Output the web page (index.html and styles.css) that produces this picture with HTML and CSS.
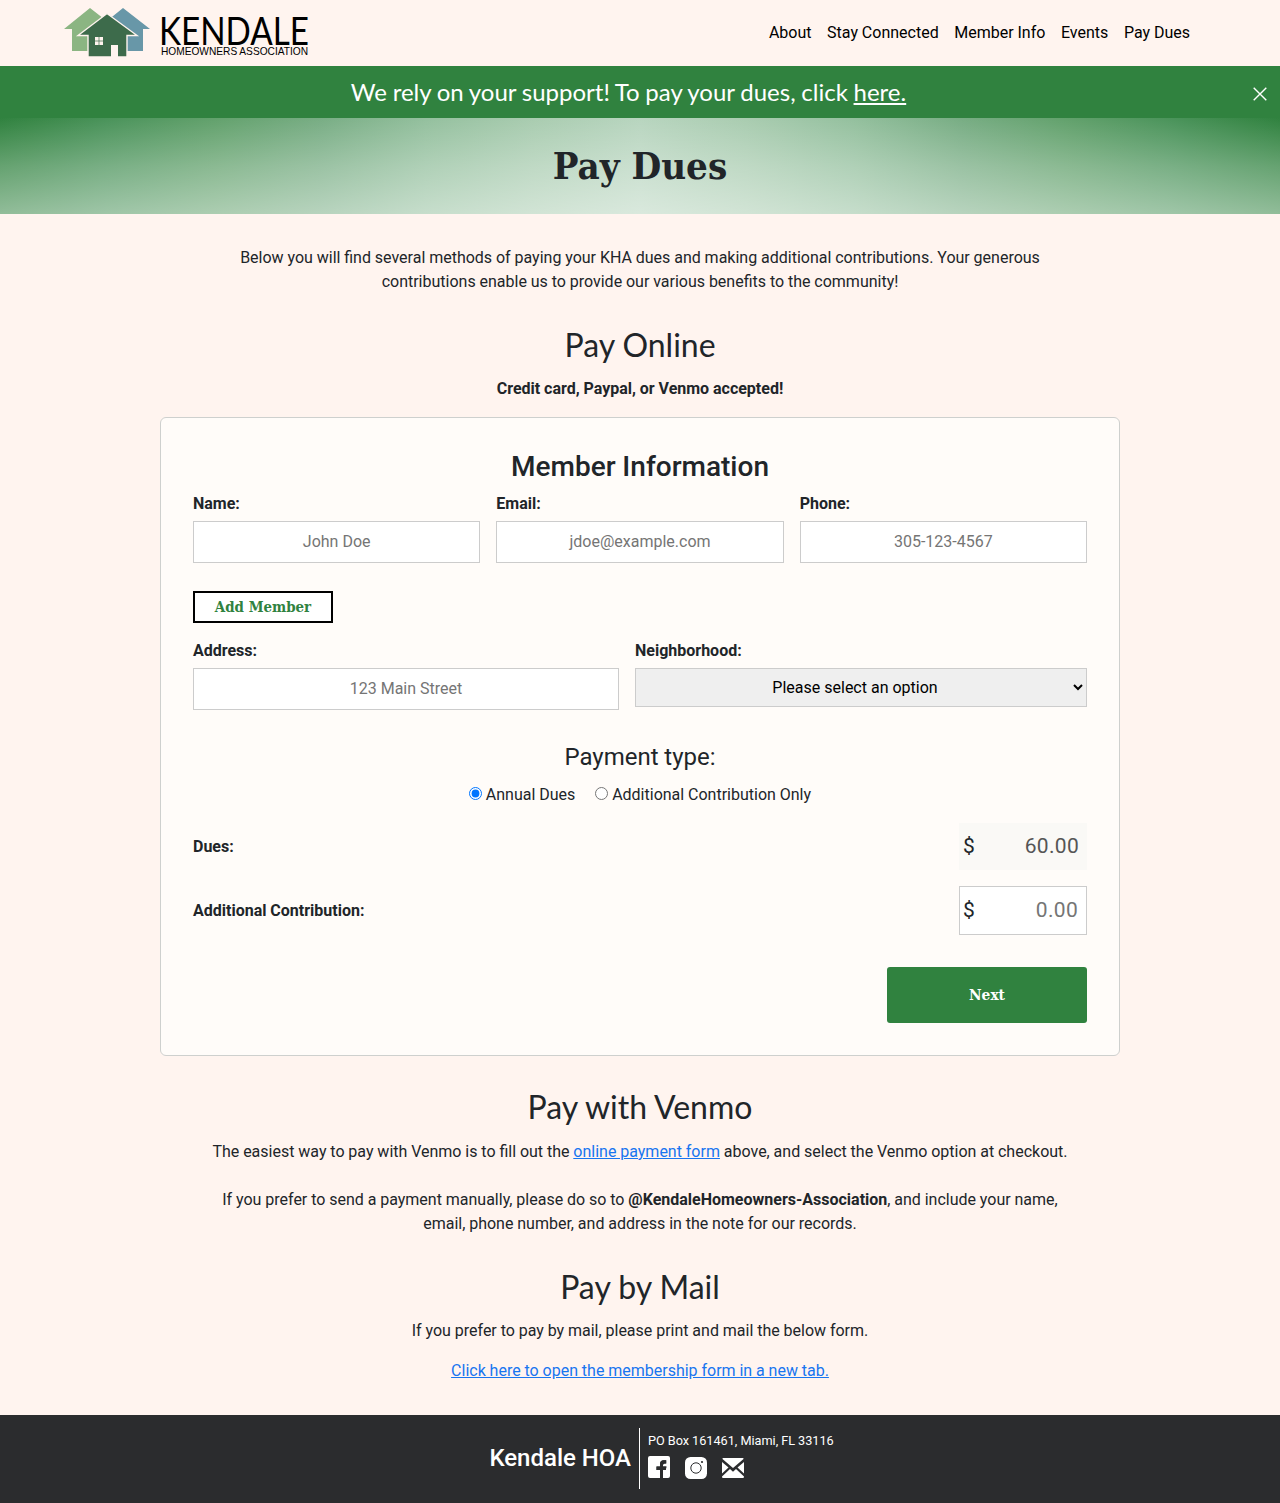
FILE: index.html
```html
<!DOCTYPE html>
<html lang="en">
<head>
<meta charset="utf-8">
<title>Pay Dues | Kendale HOA</title>
<link rel="stylesheet" href="styles.css">
</head>
<body>
<header class="site-header">
  <svg class="logo" width="250" height="50" viewBox="0 0 250 50" role="img" aria-label="Kendale Homeowners Association">
    <path fill="#8bb582" d="M0 21 26 0l27 21h-6v22H8V21z"/>
    <path fill="#6897a8" d="M33 21 59 0l27 21h-7v22H41V21z"/>
    <path fill="#3d6b4b" stroke="#fff4ef" stroke-width="1.4" d="M14 27.500 43 5.500l30 22h-10v21.500H24V27.500z"/>
    <path fill="#fff4ef" d="M31 29h8v8h-8zM47 37h7v12h-7z"/>
    <path stroke="#3d6b4b" stroke-width=".7" d="M35 29v8M31 33h8"/>
    <text class="logo-name" x="95" y="36.500" textLength="150" lengthAdjust="spacingAndGlyphs">KENDALE</text>
    <text class="logo-sub" x="97" y="47" textLength="147" lengthAdjust="spacingAndGlyphs">HOMEOWNERS ASSOCIATION</text>
  </svg>
  <nav class="nav"><a>About</a><a>Stay Connected</a><a>Member Info</a><a>Events</a><a>Pay Dues</a></nav>
</header>
<div class="notice">
  <p>We rely on your support! To pay your dues, click <a>here.</a></p>
  <svg class="close" width="14" height="14" viewBox="0 0 14 14"><path d="m.7.7 12.600 12.600M13.300.7.7 13.300"/></svg>
</div>
<div class="hero"><h1>Pay Dues</h1></div>
<main>
  <p class="intro">Below you will find several methods of paying your KHA dues and making additional contributions. Your generous contributions enable us to provide our various benefits to the community!</p>
  <h2>Pay Online</h2>
  <p class="accepted">Credit card, Paypal, or Venmo accepted!</p>
  <form class="card">
    <h3>Member Information</h3>
    <div class="fields members">
      <label>Name:<input type="text" placeholder="John Doe"></label>
      <label>Email:<input type="text" placeholder="jdoe@example.com"></label>
      <label>Phone:<input type="text" placeholder="305-123-4567"></label>
    </div>
    <button class="add" type="button">Add Member</button>
    <div class="fields location">
      <label>Address:<input type="text" placeholder="123 Main Street"></label>
      <label>Neighborhood:<select><option>Please select an option</option></select></label>
    </div>
    <h4>Payment type:</h4>
    <div class="types">
      <label><input type="radio" name="type" checked> Annual Dues</label>
      <label><input type="radio" name="type"> Additional Contribution Only</label>
    </div>
    <div class="amount"><span>Dues:</span><div class="money fixed"><span>$</span><b>60.00</b></div></div>
    <div class="amount"><span>Additional Contribution:</span><div class="money entry"><span>$</span><b>0.00</b></div></div>
    <button class="next" type="button">Next</button>
  </form>
  <h2 class="venmo">Pay with Venmo</h2>
  <p class="text">The easiest way to pay with Venmo is to fill out the <a>online payment form</a> above, and select the Venmo option at checkout.</p>
  <p class="text manual">If you prefer to send a payment manually, please do so to <strong>@KendaleHomeowners-Association</strong>, and include your name, email, phone number, and address in the note for our records.</p>
  <h2 class="mail">Pay by Mail</h2>
  <p class="text">If you prefer to pay by mail, please print and mail the below form.</p>
  <p class="text open"><a>Click here to open the membership form in a new tab.</a></p>
</main>
<footer>
  <div class="brand">Kendale HOA</div>
  <div class="contact">
    <p>PO Box 161461, Miami, FL 33116</p>
    <div class="social">
      <svg width="22" height="22" viewBox="0 0 22 22"><path fill="#fff" d="M2 0h18q2 0 2 2v18q0 2-2 2h-2v-8h-0.200l.7-3.500h-3.500V9q0-1.600 1.700-1.600h1.500V4.200h-2.500Q12 4.200 12 8.300v2.200H8.500V14H12v8H2q-2 0-2-2V2q0-2 2-2z"/><path fill="#2b2c2e" d="M12 22V14H8.500v-3.500H12V8.300q0-4.100 3.700-4.100h2.500v3.200h-1.500Q15 7.400 15 9v1.500h3.300l-.5 3.500H15v8z"/><path fill="#fff" d="M15 14h5v7.600q-.8.400-1.500.4H15z"/></svg>
      <svg class="insta" width="22" height="22" viewBox="0 0 22 22"><rect width="22" height="22" rx="5.500" fill="#fff"/><circle cx="11" cy="11" r="5.200" fill="none" stroke="#2b2c2e"/><circle cx="17" cy="5" r="1.100" fill="#2b2c2e"/></svg>
      <svg class="mail-icon" width="22" height="20" viewBox="0 0 22 20"><path fill="#fff" d="M1 0h20q.6 0 .5 1L11 10 .5 1Q.4 0 1 0zM0 4l6.500 5.500L0 15.500zM22 4l-6.500 5.500 6.500 6zM8 11l3 2.700 3-2.700 8 7.500q0 1.500-1 1.500H1q-1 0-1-1.500z"/></svg>
    </div>
  </div>
</footer>
</body>
</html>
```
FILE: styles.css
```css
* { box-sizing: border-box; }
body { margin: 0; background: #fff4ef; color: #212529; font: 16px/24px Roboto, sans-serif; word-spacing: -.12px; }
h1, h2, h3, h4, p { margin: 0; }
.site-header { height: 66px; display: flex; justify-content: space-between; padding: 8px 90px 0 64px; }
.logo { overflow: visible; }
.logo-name { font: 38px Lato, sans-serif; fill: #000; }
.logo-sub { font: 10.500px "Liberation Sans", sans-serif; fill: #000; }
.nav { display: flex; gap: 15.600px; padding-top: 13px; color: #000; }
.notice { height: 52px; background: #30823f; color: #fff; display: flex; align-items: center; padding: 0 13px 0 16px; font: 24px/36px Lato, sans-serif; word-spacing: -.45px; }
.notice p { flex: 1; text-align: center; padding-right: 12px; }
.notice a, main a { text-decoration: underline; }
.close { margin-top: 3px; stroke: #fff; stroke-width: 1.400; }
.hero {
  height: 96px;
  padding-top: 24px;
  text-align: center;
  background:
    linear-gradient(rgba(255, 255, 255, 0), rgba(255, 255, 255, .26) 50%, rgba(255, 255, 255, .47)),
    linear-gradient(90deg, #30823f, #4a935a 8.330%, #62a16c 16.670%, #78ad84 25%, #94c09e 33.330%, #a9ccb0 41.670%, #b8d5bf 50%, #a9ccb0 58.330%, #94c09e 66.670%, #78ad84 75%, #62a16c 83.330%, #4a935a 91.670%, #30823f);
}
h1 { font: 700 38.100px/48px "Roboto Slab", "DejaVu Serif Condensed", "DejaVu Serif", serif; font-stretch: condensed; }
main { width: 960px; margin: 0 auto; padding-top: 32px; text-align: center; }
.intro { width: 860px; margin: 0 auto; padding: 0 25px; }
h2 { font: 400 32px/38px Lato, sans-serif; margin: 32px 0 13px; }
.accepted { font-weight: 700; }
.card { display: flex; flex-direction: column; height: 639px; margin-top: 16px; padding: 32px; border: 1px solid #ced0ce; border-radius: 6px; background: #fffcf9; }
h3 { font: 500 28px/34px Roboto, sans-serif; margin-bottom: 8px; }
.fields { display: grid; gap: 16px; text-align: left; font-weight: 700; }
.members { grid-template-columns: repeat(3, 1fr); }
.location { grid-template-columns: 426px 1fr; margin-top: 16px; }
.fields input, .fields select { display: block; width: 100%; height: 42px; margin-top: 5px; border: 1px solid #ccc; text-align: center; font: 16px Roboto, sans-serif; padding: 0 8px 2px; color: #000; border-radius: 0; }
.fields select { height: 39px; padding: 0; background: #efefef; }
.fields input::placeholder { color: #757575; }
.add { width: 140px; height: 32px; margin-top: 28px; padding: 0; border: 2px solid #000; background: #fff; color: #30823f; font: 700 14.900px/24px "Roboto Slab", "DejaVu Serif Condensed", "DejaVu Serif", serif; font-stretch: condensed; }
h4 { margin-top: 33px; font: 400 24px/29px Roboto, sans-serif; }
.types { display: flex; justify-content: center; gap: 20px; margin: 11px 0 16px; }
.types input { margin: 0; }
.amount { display: flex; justify-content: space-between; align-items: center; margin-bottom: 16px; font-weight: 700; }
.money { width: 128px; height: 47px; display: flex; justify-content: space-between; align-items: center; padding: 0 8px 2px 4px; font-size: 21px; font-weight: 400; }
.money b { font-weight: 400; color: #555; letter-spacing: .3px; }
.fixed { background: #faf9f6; }
.entry { height: 49px; border: 1px solid #ccc; background: #fff; padding-left: 3px; }
.entry b { color: #757575; }
.next { width: 200px; height: 56px; margin: 16px 0 0 auto; border: 0; border-radius: 3px; background: #30823f; color: #fff; font: 700 15.300px/24px "Roboto Slab", "DejaVu Serif Condensed", "DejaVu Serif", serif; font-stretch: condensed; }
.venmo { margin-top: 32px; margin-bottom: 14px; }
.text { padding: 0 50px; }
.text a { color: #1875f0; }
.manual { margin-top: 24px; }
.mail { margin-bottom: 13px; }
.open { margin-top: 16px; }
footer { height: 88px; margin-top: 32px; padding-top: 13px; display: flex; background: #2b2c2e; color: #fff; }
.brand { width: 640px; height: 61px; padding-right: 8px; border-right: 1px solid #fff; text-align: right; font-size: 24px; line-height: 60px; font-weight: 500; }
.contact { padding-left: 8px; }
.contact p { font-size: 12.700px; line-height: 24px; padding-top: 1px; }
.social { display: flex; gap: 15px; margin-top: 3px; }
.insta { margin-top: 1px; }
.mail-icon { margin-top: 2px; }
```
